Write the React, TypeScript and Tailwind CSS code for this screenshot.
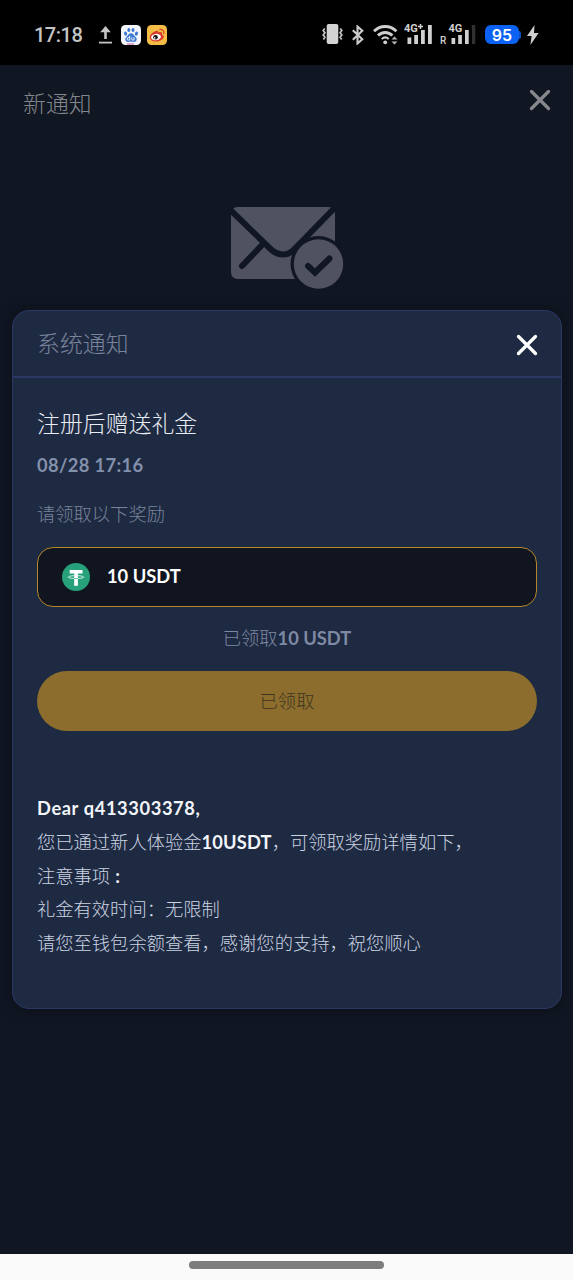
import type { ReactNode } from 'react';

const Latin = ({ children, className = '' }: { children: ReactNode; className?: string }) => (
  <span className={`font-['Lato','Noto_Sans_CJK_SC',sans-serif] font-bold leading-none ${className}`}>{children}</span>
);

function StatusBar() {
  return (
    <div className="flex h-[65px] shrink-0 items-center bg-black pl-[34px] text-[#d0d0d0]">
      <span className="mt-[4px] w-[62px] whitespace-nowrap font-['Roboto',sans-serif] text-[20px] font-medium leading-6 tracking-[-0.5px] text-[#c4c4c4]">17:18</span>
      <svg className="ml-[2px] mt-1" width="15" height="20" viewBox="0 0 15 20" fill="none" stroke="#c4c4c4">
        <path d="M7.5 14V4" strokeWidth="2.6" />
        <path d="M2.2 7.2 7.5 1l5.3 6.200z" fill="#c4c4c4" stroke="none" />
        <path d="M1 17.600h13" strokeWidth="1.8" />
      </svg>
      <svg className="ml-2 mt-[4px]" width="20" height="20" viewBox="0 0 20 20">
        <rect width="20" height="20" rx="4.500" fill="#f4f6fb" />
        <g fill="#3d78d2">
          <ellipse cx="4.600" cy="8.600" rx="1.500" ry="2.100" transform="rotate(-15 4.600 8.600)" />
          <ellipse cx="7.800" cy="5" rx="1.500" ry="2.100" />
          <ellipse cx="12" cy="5" rx="1.500" ry="2.100" />
          <ellipse cx="15.400" cy="8.600" rx="1.500" ry="2.100" transform="rotate(15 15.400 8.600)" />
          <path d="M10 8.300c2.300 0 2.900 2.200 4.600 3.700 2.200 2 .9 5-1.700 4.900-1.100 0-1.800-.4-2.900-.4s-1.800.4-2.900.4c-2.600.1-3.900-2.900-1.700-4.900C7.100 10.500 7.700 8.300 10 8.300z" />
        </g>
        <path d="M8.700 10.800v4.300H7.400a1.200 1.200 0 0 1 0-2.500h1.300M10.800 12.300v1.900q0 .9.900.9h1.300v-2.800" fill="none" stroke="#fff" strokeWidth=".9" />
        <path d="M6 19h7" stroke="#c0398c" strokeWidth=".8" />
      </svg>
      <svg className="ml-[6px] mt-[4px]" width="20" height="20" viewBox="0 0 20 20">
        <rect width="20" height="20" rx="4.500" fill="#f5bd45" />
        <path d="M8.800 6.100c1.700-.8 2.800-.1 2.500 1.400 2.700-1 4.400-.1 3.600 1.900 1.900.7 2.400 2.100 1.400 3.900-2.300 4.200-13.100 4.500-13.500-.8C2.600 10.100 6 7 8.800 6.100z" fill="#d83a2c" />
        <ellipse cx="9" cy="12.100" rx="4.900" ry="3.200" fill="#fff" transform="rotate(-8 9 12.100)" />
        <circle cx="8.500" cy="12.300" r="2.300" fill="#18120f" />
        <circle cx="7.700" cy="12.900" r=".8" fill="#fff" />
        <path d="M12.400 4.600c3-.7 5.200 1.500 4.300 4.400" fill="none" stroke="#d83a2c" strokeWidth="1.200" />
      </svg>

      <svg className="ml-[155px] mt-[3px]" width="21" height="20" viewBox="0 0 21 20" fill="none" stroke="#c6c6c6" strokeWidth="1.700">
        <rect x="4.700" y="0" width="11.600" height="20" rx="2" fill="#d4d4d4" stroke="none" />
        <path d="m2.800 4.500-1.600 2 1.700 2.200-1.700 2.300 1.700 2.200-1.600 2.200M18.200 4.500l1.600 2-1.700 2.200 1.700 2.300-1.700 2.200 1.600 2.200" />
      </svg>
      <svg className="ml-[9px] mt-[4px]" width="12" height="20" viewBox="0 0 12 20" fill="none" stroke="#cbcbcb" strokeWidth="2.100">
        <path d="m.8 5.300 9.500 9-4.800 4.200v-17l4.800 4.200-9.500 9" />
      </svg>
      <svg className="ml-[9px] mt-[4px]" width="26" height="21" viewBox="0 0 26 21" fill="none" stroke="#d0d0d0" strokeWidth="2.900">
        <path d="M1 7.200c6.200-6.300 16.200-6.300 22.400 0M5 11.500c4.100-4.100 10.300-4.100 14.400 0" />
        <path d="M8.700 15c2.100-2 4.900-2 7 0" strokeWidth="2" />
        <circle cx="12.200" cy="18.300" r="1.900" fill="#d0d0d0" stroke="none" />
        <path d="m18.500 15.500 3-3 3 3zm0 2 3 3 3-3z" fill="#b8b8b8" stroke="none" />
      </svg>
      <svg className="ml-[5px] mt-[2px]" width="29" height="22" viewBox="0 0 29 22" fill="#d0d0d0">
        <text x="0" y="9" className="font-['Roboto',sans-serif] text-[11px] font-bold">4G</text>
        <path d="M14 3.500h5M16.500 1v5" stroke="#d0d0d0" strokeWidth="1.500" />
        <path d="M3.500 14.500h3.800V21H3.500zM10.200 12H14v9h-3.800zM17 7h3.800v14H17zM24 2h3.800v19H24z" />
      </svg>
      <svg className="ml-[7px] mt-[2px]" width="36" height="24" viewBox="0 0 36 24" fill="#d0d0d0">
        <text x="0" y="21.500" className="font-['Roboto',sans-serif] text-[10px] font-medium">R</text>
        <text x="8.500" y="10" className="font-['Roboto',sans-serif] text-[11px] font-bold">4G</text>
        <path d="M11.500 16h3.700v6h-3.700zM18.200 13h3.700v9h-3.700zM25 8h3.700v14H25z" />
        <path d="M32 3h3.300v19H32z" fill="#303030" />
      </svg>
      <div className="ml-[9px] mt-[4px] flex items-center">
        <span className="flex h-[19px] w-[34px] items-center justify-center rounded-[6px] bg-[#0b62f4] pt-px font-['Inter',sans-serif] text-[16px] font-semibold leading-none text-white">95</span>
        <span className="h-2 w-[2px] rounded-r bg-[#0b4fc4]" />
      </div>
      <svg className="ml-[6px] mt-[4px]" width="12" height="20" viewBox="0 0 12 20" fill="#d0d0d0">
        <path d="M7.500 0 0 11h4.600L3.400 20 11.600 8H7z" />
      </svg>
    </div>
  );
}

function CloseIcon({ color }: { color: string }) {
  return (
    <svg width="22" height="22" viewBox="0 0 22 22" fill="none" stroke={color} strokeWidth="3.300" strokeLinecap="round">
      <path d="m2.500 2.500 17 17M19.500 2.500l-17 17" />
    </svg>
  );
}

function MailIcon() {
  return (
    <svg className="ml-[231px]" width="113" height="83" viewBox="0 0 113 83">
      <path d="M7 0H97Q104 0 104 7V72H7Q0 72 0 65V7Q0 0 7 0z" fill="#51525f" />
      <path d="m-2 1.500 41 40c8 8 18 8 25 0L106-1.500" fill="none" stroke="#101622" strokeWidth="6" />
      <path d="M31 38 11 59" fill="none" stroke="#101622" strokeWidth="6" strokeLinecap="round" />
      <circle cx="87.500" cy="57" r="28" fill="#101622" />
      <circle cx="87.500" cy="57" r="24.700" fill="#51525f" />
      <path d="m77 59 7 6.500L98.500 51.500" fill="none" stroke="#101622" strokeWidth="6" strokeLinecap="round" />
    </svg>
  );
}

function TetherIcon() {
  return (
    <svg width="28" height="28" viewBox="0 0 28 28">
      <circle cx="14" cy="14" r="14" fill="#26a17b" />
      <path d="M7.700 7h12.800v3.500h-4.600v12.300h-3.700V10.500H7.700z" fill="#fff" />
      <path d="M12 12.700c-8 .4-8 2.700 2 2.800 10-.1 10-2.400 2-2.800" fill="none" stroke="#fff" strokeWidth=".8" />
      <path d="M12.200 15.500h3.700" stroke="#26a17b" strokeWidth=".7" />
    </svg>
  );
}

function NoticeDialog() {
  return (
    <section className="absolute left-[12px] top-[310px] flex h-[699px] w-[550px] flex-col rounded-[17px] border-[1.500px] border-[#2c3764] bg-[#1e2a41] shadow-[0_0_14px_rgba(0,0,0,0.35)]">
      <header className="flex h-[67px] shrink-0 items-center justify-between border-b-2 border-[#2c3763] pl-6 pr-[23px]">
        <h2 className="-mt-[3px] text-[22.900px] leading-[32px] text-[#79839c]">系统通知</h2>
        <button aria-label="关闭" className="mt-[3px]"><CloseIcon color="#fff" /></button>
      </header>
      <div className="flex flex-col px-6">
        <h3 className="mt-[27px] text-[22.900px] leading-[34px] text-[#e9edf5]">注册后赠送礼金</h3>
        <p className="mt-[8px] h-[34px] text-[18.300px] leading-[34px] text-[#8390ac]"><Latin className="tracking-[0.35px]">08/28 17:16</Latin></p>
        <p className="mt-[15px] text-[18.300px] leading-[34px] text-[#79839c]">请领取以下奖励</p>
        <div className="mt-[17px] flex h-[60px] items-center rounded-[16px] border-[1.500px] border-[#b5862b] bg-[#10151f] pl-6">
          <TetherIcon />
          <span className="-mt-[5px] ml-[17px] text-[18.300px] leading-[34px] text-white"><Latin>10 USDT</Latin></span>
        </div>
        <p className="mt-[13px] h-[34px] text-center text-[18.300px] leading-[34px] text-[#7f89a4]">已领取<Latin>10 USDT</Latin></p>
        <button className="mt-[17px] h-[60px] rounded-full bg-[#8c6d2d] pb-px text-[18.300px] text-[#3f3520]">已领取</button>
        <div className="mt-[60px] whitespace-nowrap text-[18.300px] leading-[33.800px] text-[#ccd4e3]">
          <p className="h-[33.800px] text-[#f2f5fa]"><Latin className="tracking-[0.600px]">Dear q413303378,</Latin></p>
          <p className="h-[33.800px]">您已通过新人体验金<Latin className="tracking-[0.150px] text-[#f2f5fa]">10USDT</Latin>，可领取奖励详情如下，</p>
          <p className="h-[33.800px]">注意事项<Latin className="ml-[5px] text-[#f2f5fa]">:</Latin></p>
          <p className="h-[33.800px]">礼金有效时间：无限制</p>
          <p className="h-[33.800px]">请您至钱包余额查看，感谢您的支持，祝您顺心</p>
        </div>
      </div>
    </section>
  );
}

export default function App() {
  return (
    <main className="relative flex h-[1280px] w-[573px] flex-col overflow-hidden bg-[#101622] font-['Noto_Sans_CJK_SC',sans-serif] font-light">
      <StatusBar />
      <header className="flex h-[77px] shrink-0 items-center justify-between pl-[23px] pr-[22px]">
        <h1 className="-mt-[4px] text-[22.900px] leading-[32px] text-[#85868b]">新通知</h1>
        <button aria-label="关闭" className="-mt-[7px]"><CloseIcon color="#87888d" /></button>
      </header>
      <div className="grow pt-[65px]"><MailIcon /></div>
      <footer className="flex h-[26px] shrink-0 justify-center bg-[#fafafa] pt-[7px]">
        <span className="h-[8px] w-[195px] rounded-full bg-[#7d7d7d]" />
      </footer>
      <NoticeDialog />
    </main>
  );
}
